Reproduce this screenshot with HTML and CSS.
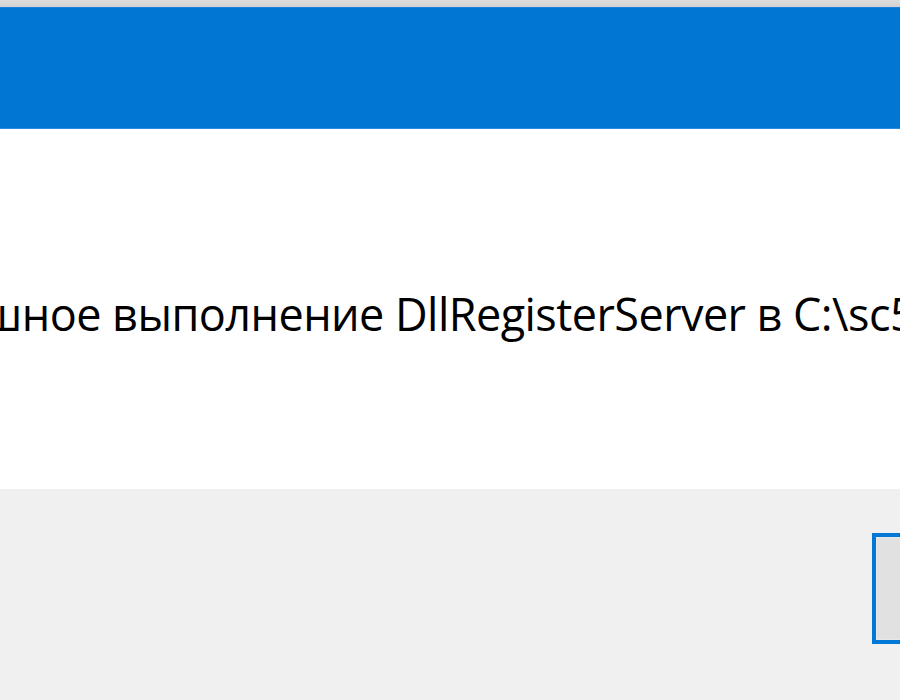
FILE: index.html
```html
<!DOCTYPE html>
<html lang="ru">
<head>
<meta charset="utf-8">
<title>RegSvr32</title>
<link rel="stylesheet" href="styles.css">
</head>
<body>
<div class="dialog">
  <div class="frame-edge"></div>
  <div class="titlebar"></div>
  <div class="content">
    <p class="message">Успешное выполнение DllRegisterServer в C:\sc5.dll.</p>
  </div>
  <div class="footer">
    <button class="ok-button" type="button"><span class="ok-label">ОК</span></button>
  </div>
</div>
</body>
</html>
```
FILE: styles.css
```css
html, body {
  margin: 0;
  padding: 0;
  width: 900px;
  height: 700px;
  overflow: hidden;
  background: #f0f0f0;
}

.dialog {
  display: flex;
  flex-direction: column;
  width: 900px;
  height: 700px;
  overflow: hidden;
  font-family: "Open Sans", "Noto Sans", sans-serif;
}

.frame-edge {
  height: 7px;
  background: linear-gradient(#dcdcdc, #d2d2d2);
}

.titlebar {
  box-sizing: border-box;
  height: 122px;
  background: #0176d3;
  border-top: 1px solid #1a80db;
  border-bottom: 1px solid #2a8ae0;
}

.content {
  height: 360px;
  background: #ffffff;
  box-sizing: border-box;
  padding-top: 155px;
  overflow: hidden;
}

.message {
  margin: 0 0 0 -118px;
  font-size: 45px;
  letter-spacing: -0.55px;
  line-height: 60px;
  color: #000000;
  white-space: nowrap;
}

.footer {
  flex: 1;
  background: #f0f0f0;
  display: flex;
  box-sizing: border-box;
  padding-top: 44px;
  padding-left: 872px;
  overflow: hidden;
}

.ok-button {
  box-sizing: border-box;
  width: 240px;
  height: 111px;
  flex-shrink: 0;
  background: #e1e1e1;
  border: 4px solid #0078d7;
  box-shadow: inset 0 0 0 1px #e8e8e8;
  padding: 0;
  margin: 0;
  font-family: "Open Sans", sans-serif;
  font-size: 40px;
  color: #000000;
}
```
